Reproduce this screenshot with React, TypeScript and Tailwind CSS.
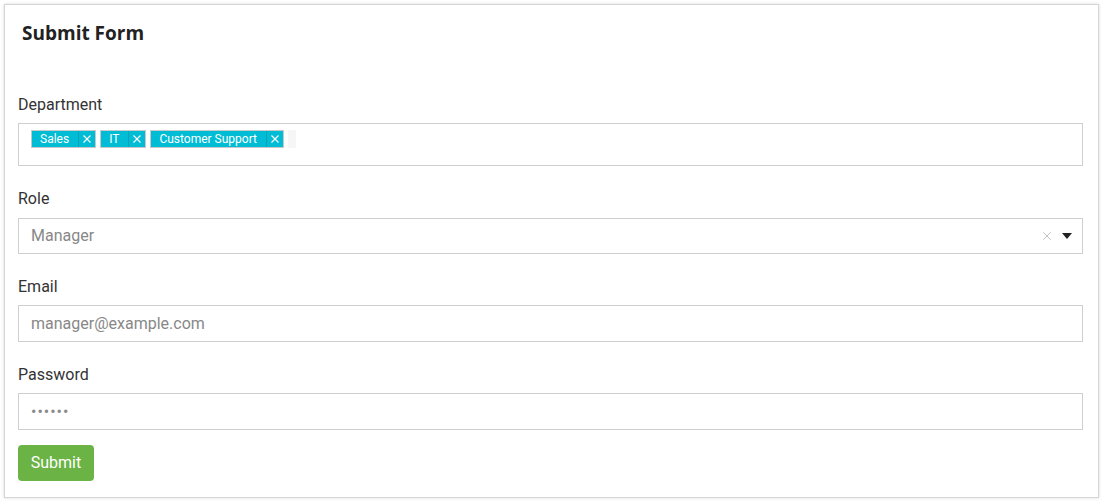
import { X } from 'lucide-react'

const tags = ['Sales', 'IT', 'Customer Support']

function Label({ children }: { children: string }) {
  return <div className="text-[16px] leading-[22px] text-[#333]">{children}</div>
}

function Cross() {
  return (
    <svg width="8" height="8" viewBox="0 0 8 8">
      <path d="M0.5 0.5 L7.5 7.5 M7.5 0.5 L0.5 7.5" stroke="white" strokeWidth="1.2" />
    </svg>
  )
}

export default function App() {
  return (
    <div className="p-[4px] font-['Roboto',sans-serif] bg-white">
      <div className="w-[1095px] h-[494px] border border-[#d6d6d6] shadow-[0_0_3px_rgba(0,0,0,0.15)] pl-[13px] pr-[15px]">
        <h1 className="mt-[16px] ml-[4px] font-['Open_Sans',sans-serif] font-bold text-[19px] leading-[24px] text-[#222]">
          Submit Form
        </h1>

        <div className="mt-[49px]">
          <Label>Department</Label>
          <div className="mt-[7px] h-[43px] border border-[#cfcfcf] px-[12px] pt-[6px] flex items-start gap-[4px]">
            {tags.map((t) => (
              <span
                key={t}
                className="h-[18px] flex items-center bg-[#00bcd4] border border-[#c8c8c8] text-white text-[12px] leading-none"
              >
                <span className="pl-[8px] pr-[9px]">{t}</span>
                <span className="h-full border-l border-[#0aa3b6] flex items-center px-[4px]">
                  <Cross />
                </span>
              </span>
            ))}
            <span className="h-[18px] w-[8px] bg-[#f6f6f6]" />
          </div>
        </div>

        <div className="mt-[22px]">
          <Label>Role</Label>
          <div className="mt-[8px] h-[36px] border border-[#cfcfcf] pl-[12px] pr-[10px] flex items-center">
            <span className="flex-1 text-[16px] text-[#888]">Manager</span>
            <X className="w-[14px] h-[14px] text-[#bbb]" strokeWidth={1.5} />
            <svg className="ml-[8px]" width="10" height="6" viewBox="0 0 10 6">
              <path d="M0 0 L10 0 L5 6 Z" fill="#222" />
            </svg>
          </div>
        </div>

        <div className="mt-[22px]">
          <Label>Email</Label>
          <div className="mt-[7px] h-[37px] border border-[#cfcfcf] px-[12px] flex items-center text-[16px] text-[#888]">
            manager@example.com
          </div>
        </div>

        <div className="mt-[22px]">
          <Label>Password</Label>
          <div className="mt-[7px] h-[37px] border border-[#cfcfcf] px-[12px] flex items-center text-[16px] text-[#888] tracking-[1px]">
            ••••••
          </div>
        </div>

        <button className="mt-[15px] w-[76px] h-[36px] rounded-[4px] bg-[#6ab344] text-white text-[16px]">
          Submit
        </button>
      </div>
    </div>
  )
}
